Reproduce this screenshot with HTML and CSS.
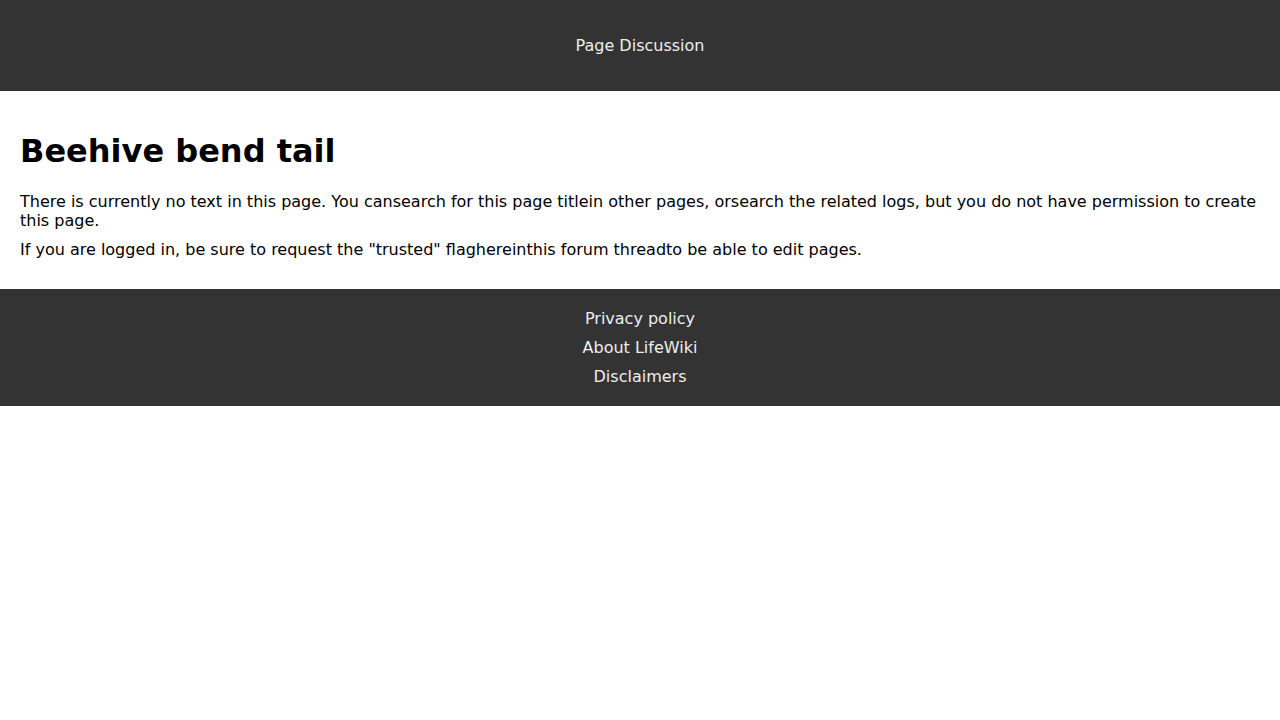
FILE: index.html
```html
<!DOCTYPE html>
<html lang="en">
<head>
<meta charset="utf-8">
<title>Beehive bend tail - LifeWiki</title>
<link rel="stylesheet" href="styles.css">
</head>
<body>
<header class="site-header">
  <nav class="tabs"><a href="#">Page</a> <a href="#">Discussion</a></nav>
</header>
<main class="content">
  <h1 class="title">Beehive bend tail</h1>
  <p class="text">There is currently no text in this page. You can<a href="#">search for this page title</a>in other pages, or<a href="#">search the related logs</a>, but you do not have permission to create this page.</p>
  <p class="text">If you are logged in, be sure to request the "trusted" flag<a href="#">here</a>in<a href="#">this forum thread</a>to be able to edit pages.</p>
</main>
<footer class="site-footer">
  <a href="#">Privacy policy</a>
  <a href="#">About LifeWiki</a>
  <a href="#">Disclaimers</a>
</footer>
</body>
</html>
```
FILE: styles.css
```css
html, body {
  margin: 0;
  padding: 0;
  background: #fff;
  font-family: "DejaVu Sans", sans-serif;
  font-size: 16px;
  line-height: 1.2;
  color: #000;
}
a {
  color: inherit;
  text-decoration: none;
}
.site-header {
  background: #333;
  color: #eee;
  padding: 36px 0;
  text-align: center;
}
.content {
  padding: 20px 20px 19px;
}
.title {
  font-size: 32px;
  font-weight: bold;
  margin: 21.4px 0 22.4px;
  line-height: 37px;
}
.text {
  margin: 10px 0;
}
.site-footer {
  background: #333;
  color: #eee;
  padding: 20px 0;
  display: flex;
  flex-direction: column;
  align-items: center;
  gap: 10px;
}
```
